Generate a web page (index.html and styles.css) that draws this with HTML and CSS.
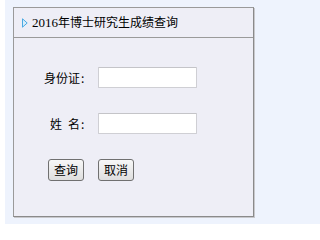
FILE: index.html
```html
<!DOCTYPE html>
<html lang="zh">
<head>
<meta charset="utf-8">
<title>2016年博士研究生成绩查询</title>
<link rel="stylesheet" href="styles.css">
</head>
<body>
<div class="wrap">
  <div class="panel">
    <div class="panel-head">
      <svg class="arrow" width="6" height="10" viewBox="0 0 6 10"><polygon points="0.5,0.8 5.2,5 0.5,9.2" fill="#d9eefb" stroke="#4ba9e2" stroke-width="1"/></svg>
      <span class="title"><span class="num">2016</span>年博士研究生成绩查询</span>
    </div>
    <form class="panel-body">
      <div class="row">
        <label class="lbl">身份证<span class="colon">:</span></label>
        <input class="field" type="text">
      </div>
      <div class="row">
        <label class="lbl">姓<span class="sp"></span>名<span class="colon">:</span></label>
        <input class="field" type="text">
      </div>
      <div class="actions">
        <button type="button" class="btn">查询</button>
        <button type="button" class="btn">取消</button>
      </div>
    </form>
  </div>
</div>
</body>
</html>
```
FILE: styles.css
```css
html, body {
  margin: 0;
  padding: 0;
  background: #ffffff;
}
body {
  font-family: "Noto Sans CJK SC", "Liberation Sans", sans-serif;
  font-size: 12px;
  color: #000;
}
.wrap {
  margin-left: 5px;
  height: 224px;
  box-sizing: border-box;
  background: #eef3fd;
  padding: 7px 0 0 8px;
}
.panel {
  width: 241px;
  height: 210px;
  box-sizing: border-box;
  border: 1px solid #9a9a9a;
  border-right-color: #8a8a8a;
  border-bottom-color: #8a8a8a;
  box-shadow: 1px 1px 0 #c8c8cc;
  background: #eeeef6;
}
.panel-head {
  height: 29px;
  border-bottom: 1px solid #9a9a9a;
  display: flex;
  align-items: center;
  padding-left: 8px;
}
.arrow {
  display: block;
  margin-right: 4px;
}
.title {
  font-size: 12px;
  line-height: 14px;
}
.num {
  font-family: "Liberation Serif", serif;
  font-size: 13px;
}
.panel-body {
  margin: 0;
  padding: 29px 0 0 0;
}
.row {
  display: flex;
  align-items: center;
  margin-bottom: 25px;
}
.lbl {
  width: 72px;
  text-align: right;
  margin-right: 12px;
  white-space: nowrap;
}
.colon {
  display: inline-block;
  width: 5px;
  text-align: left;
  padding-left: 1px;
}
.sp {
  display: inline-block;
  width: 6px;
}
.field {
  width: 99px;
  height: 21px;
  box-sizing: border-box;
  margin: 0;
  padding: 0 3px;
  border: 1px solid #cfcfd4;
  border-top-color: #c4c4c8;
  background: #fff;
  border-radius: 1px;
}
.actions {
  display: flex;
  gap: 14px;
  padding-left: 34px;
}
.btn {
  height: 22px;
  box-sizing: border-box;
  margin: 0;
  padding: 0 5px;
  font-family: "Noto Sans CJK SC", "Liberation Sans", sans-serif;
  font-size: 12px;
  line-height: 18px;
  color: #000;
  border: 1px solid #707070;
  border-radius: 3px;
  background: linear-gradient(#f7f7f7, #dedede);
}
```
